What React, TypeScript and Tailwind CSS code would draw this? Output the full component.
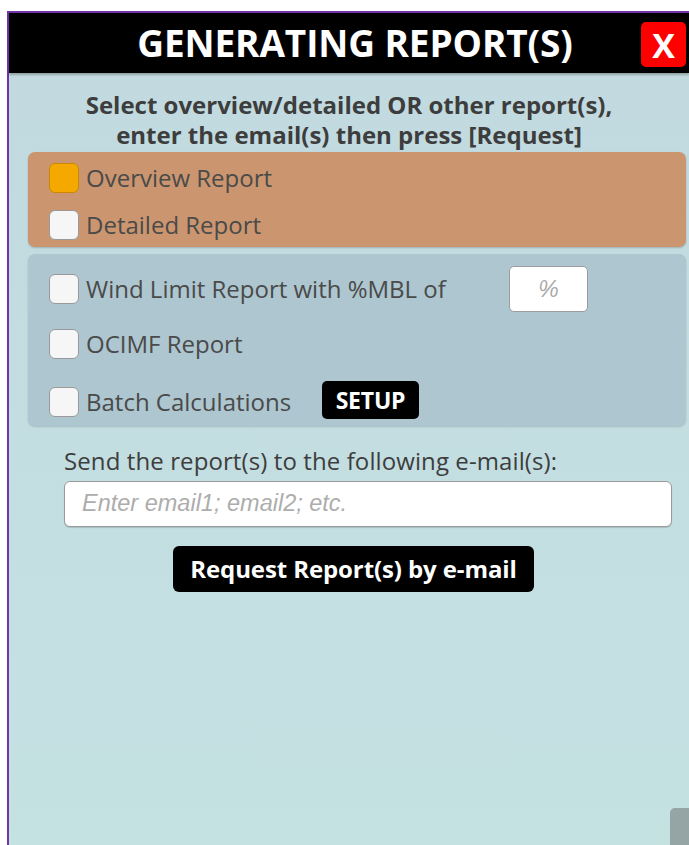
import React from 'react'

type Option = { label: string; checked?: boolean }

const MAIN_REPORTS: Option[] = [
  { label: 'Overview Report', checked: true },
  { label: 'Detailed Report' },
]

const Box = ({ checked }: { checked?: boolean }) => (
  <span
    className={
      checked
        ? 'w-[30px] h-[30px] rounded-[6px] bg-[#f5a800] border border-[#c98a00] shrink-0'
        : 'w-[30px] h-[30px] rounded-[6px] bg-[#f6f6f6] border border-[#9a9a9a] shrink-0'
    }
  />
)

const Row = ({ label, checked, className }: Option & { className?: string }) => (
  <div className={`flex items-center gap-[7px] ${className ?? ''}`}>
    <Box checked={checked} />
    <span className="text-[24px] leading-[30px] tracking-[0px] text-[#4a4a4a] whitespace-nowrap">{label}</span>
  </div>
)

const App = () => {
  return (
    <div className="w-[689px] h-[845px] bg-white overflow-hidden relative" style={{ fontFamily: '"Open Sans", sans-serif' }}>
      <div className="ml-[7px] mt-[11px] h-[834px] border-l-2 border-t-2 border-[#7033a8] bg-gradient-to-b from-[#c1d9df] to-[#c5e2e3] flex flex-col">
        {/* title bar */}
        <div className="h-[60px] bg-black flex items-center justify-center relative shrink-0 shadow-[0_2px_2px_rgba(0,0,0,0.25)]">
          <span className="text-white font-bold text-[37px] tracking-[-0.1px] ml-[12px]">GENERATING REPORT(S)</span>
          <button className="absolute left-[632px] top-[9px] w-[45px] h-[45px] rounded-[5px] bg-[#ff0000] text-white text-[34px] font-bold flex items-center justify-center leading-none">
            X
          </button>
        </div>

        <p className="text-center font-bold text-[24px] leading-[30px] text-[#3d3d3d] tracking-[0px] mt-[17px] whitespace-nowrap">
          Select overview/detailed OR other report(s),
          <br />
          enter the email(s) then press [Request]
        </p>

        <div className="ml-[19px] mr-[3px] mt-[2px] h-[95px] rounded-[7px] bg-[#cb966f] shadow-[0_1px_2px_rgba(0,0,0,0.2)] pt-[11px] pl-[21px] flex flex-col gap-[17px]">
          {MAIN_REPORTS.map((r) => (
            <Row key={r.label} {...r} />
          ))}
        </div>

        <div className="ml-[19px] mr-[3px] mt-[7px] h-[172px] rounded-[7px] bg-[#adc6cf] shadow-[0_1px_2px_rgba(0,0,0,0.15)] pt-[12px] pl-[21px] flex flex-col">
          <div className="flex items-center">
            <Row label="Wind Limit Report with %MBL of" className="w-[460px]" />
            <div className="w-[79px] h-[46px] rounded-[5px] bg-white border border-[#9c9c9c] flex items-center justify-center">
              <span className="italic text-[23px] text-[#aaaaaa]" style={{ fontFamily: '"Liberation Sans", sans-serif' }}>%</span>
            </div>
          </div>
          <Row label="OCIMF Report" className="mt-[17px]" />
          <div className="flex items-center mt-[25px]">
            <Row label="Batch Calculations" className="w-[273px]" />
            <span className="-mt-[3px] w-[97px] h-[38px] rounded-[5px] bg-black text-white font-bold text-[23px] tracking-[-0.2px] flex items-center justify-center">
              SETUP
            </span>
          </div>
        </div>

        <div className="pl-[55px] pr-[17px] mt-[20px]">
          <div className="text-[24px] leading-[30px] tracking-[0.1px] text-[#3d3d3d] whitespace-nowrap">Send the report(s) to the following e-mail(s):</div>
          <div className="mt-[5px] h-[46px] rounded-[6px] bg-white border border-[#9a9a9a] shadow-[0_1px_1px_rgba(0,0,0,0.15)] flex items-center pl-[17px]">
            <span className="italic text-[23.5px] text-[#adadad]" style={{ fontFamily: '"Liberation Sans", sans-serif' }}>
              Enter email1; email2; etc.
            </span>
          </div>
          <button className="ml-[109px] mt-[19px] w-[361px] h-[46px] rounded-[6px] bg-black text-white font-bold text-[24px] tracking-[-0.1px] leading-none">
            Request Report(s) by e-mail
          </button>
        </div>
      </div>
      {/* scroll handle peeking in the corner */}
      <div className="absolute left-[670px] top-[808px] w-[19px] h-[37px] rounded-tl-[5px] bg-[#95a4a5]" />
    </div>
  )
}

export default App
